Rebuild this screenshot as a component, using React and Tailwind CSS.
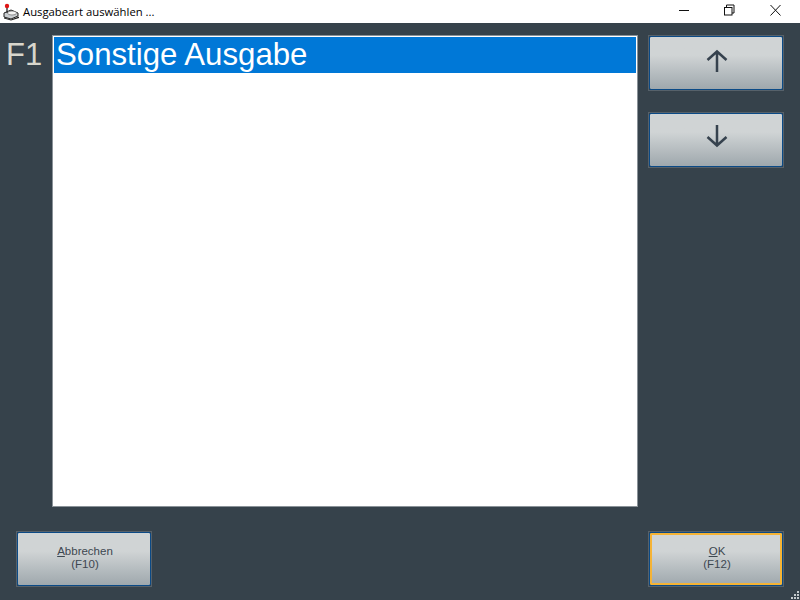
import React from "react";

function Btn({ children, ok, className = "" }) {
  return (
    <div className={"border border-[#56616a] w-[136px] h-[56px] " + className}>
      <div
        className={
          "w-full h-full rounded-[2px] border border-[#0b4a86] flex flex-col items-center justify-center bg-gradient-to-b from-[#d0d4d5] from-35% to-[#9fa8ad] text-[#3d4750] text-[11.5px] leading-[13px] pb-[3px] pl-[2px] " +
          (ok ? "shadow-[inset_0_0_0_2px_#f5b335]" : "")
        }
      >
        {children}
      </div>
    </div>
  );
}

function Arrow({ down }) {
  return (
    <svg width="22" height="24" viewBox="0 0 22 24" fill="none" stroke="#36424e" strokeWidth="2.5" className={down ? "mb-[6px]" : "mb-[1px]"}>
      {down ? (
        <path d="M11 1V21.5M1.5 13l9.5 8.5 9.5-8.5" />
      ) : (
        <path d="M11 23V2.5M1.5 11L11 2.5 20.5 11" />
      )}
    </svg>
  );
}

function AppIcon() {
  return (
    <svg width="18" height="18" viewBox="0 0 18 18">
      <path d="M2 10l7-3 7 3v3l-7 3-7-2z" fill="#c9cdd0" stroke="#222" strokeWidth="1" />
      <ellipse cx="10" cy="10" rx="4.5" ry="2" fill="#f4f4f4" stroke="#555" strokeWidth="0.6" />
      <path d="M5 3v7" stroke="#333" strokeWidth="1.4" />
      <circle cx="5" cy="3" r="2.2" fill="#e01616" />
      <path d="M2 14.5l7 2 8-3v1.5l-8 2.5-7-2z" fill="#222" />
    </svg>
  );
}

export default function App() {
  return (
    <div className="w-[800px] h-[600px] flex flex-col relative bg-[#36424b] font-['Liberation_Sans',sans-serif] overflow-hidden">
      <div className="h-[23px] bg-white flex items-center shrink-0">
        <div className="w-[23px] pl-[2px] flex items-center justify-start"><AppIcon /></div>
        <span className="text-[11.3px] text-black font-['Open_Sans','Noto_Sans',sans-serif] leading-none">Ausgabeart auswählen ...</span>
        <div className="ml-auto flex items-center h-full">
          <svg width="46" height="23" viewBox="0 0 46 23">
            <path d="M17 10.5h10" stroke="#111" strokeWidth="1" />
          </svg>
          <svg width="46" height="23" viewBox="0 0 46 23" stroke="#111" fill="none" strokeWidth="1">
            <rect x="16.5" y="7.5" width="7.5" height="7.5" />
            <path d="M18.5 7.5v-2.5h7.5v8h-2" />
          </svg>
          <svg width="46" height="23" viewBox="0 0 46 23" stroke="#111" fill="none" strokeWidth="1">
            <path d="M16.5 5l10 10.5M26.5 5l-10 10.5" />
          </svg>
        </div>
      </div>

      <div className="flex pt-[12px] shrink-0">
        <div className="w-[52px] pl-[6px] pt-[2px] text-[31px] leading-[36px] text-[#d8d6cc]">F1</div>
        <div className="w-[586px] h-[472px] bg-white border border-[#8a9298] p-px">
          <div className="h-[36px] bg-[#0078d7] text-white text-[31.2px] leading-[36px] pl-[2px]">Sonstige Ausgabe</div>
        </div>
        <div className="ml-[10px] flex flex-col gap-[21px]">
          <Btn><Arrow /></Btn>
          <Btn><Arrow down /></Btn>
        </div>
      </div>

      <div className="flex justify-between pl-[16px] pr-[16px] pt-[24px]">
        <Btn>
          <span><span className="underline">A</span>bbrechen</span>
          <span>(F10)</span>
        </Btn>
        <Btn ok>
          <span><span className="underline">O</span>K</span>
          <span>(F12)</span>
        </Btn>
      </div>

      <svg width="10" height="10" viewBox="0 0 10 10" className="absolute right-0 bottom-0" fill="#c4cacd">
        <rect x="7" y="1" width="2" height="2" />
        <rect x="4" y="4" width="2" height="2" /><rect x="7" y="4" width="2" height="2" />
        <rect x="1" y="7" width="2" height="2" /><rect x="4" y="7" width="2" height="2" /><rect x="7" y="7" width="2" height="2" />
      </svg>
    </div>
  );
}
